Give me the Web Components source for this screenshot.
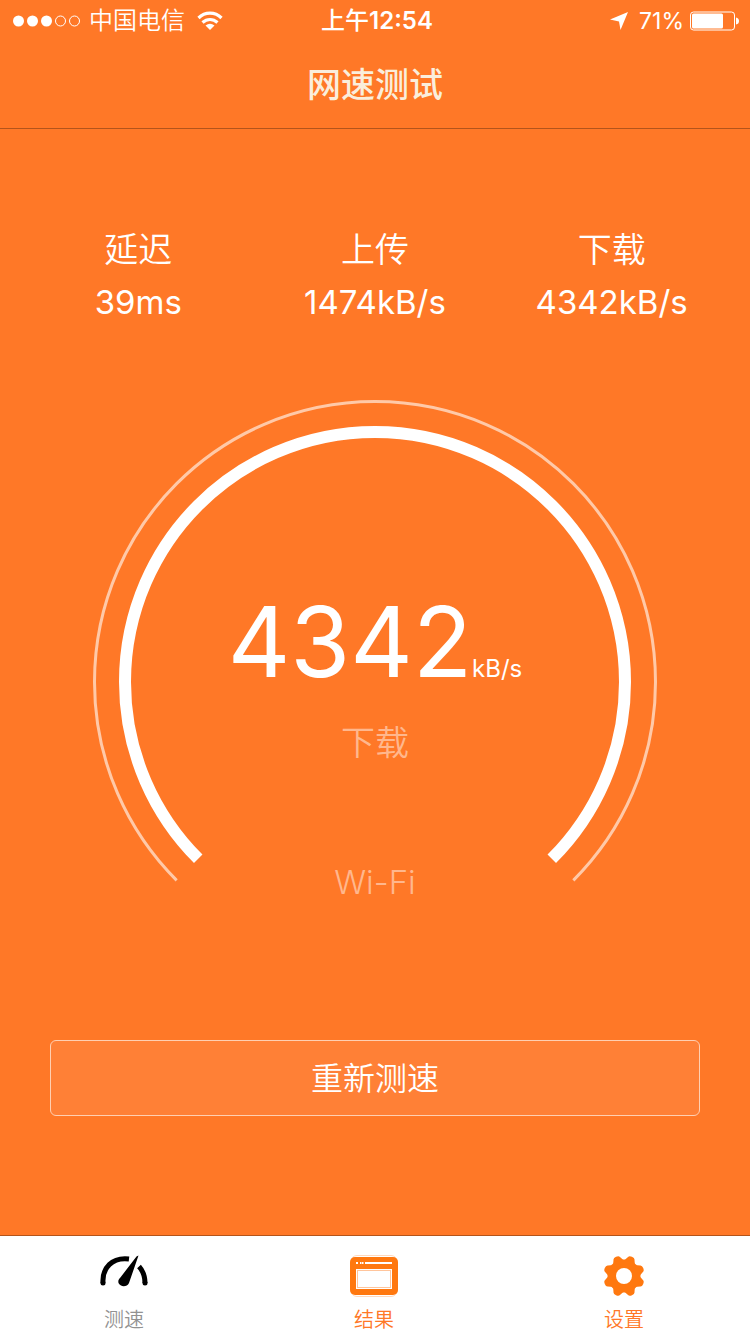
<!DOCTYPE html>
<html lang="zh-CN">
<head>
<meta charset="utf-8">
<meta name="viewport" content="width=device-width, initial-scale=1">
<title>网速测试</title>
<style>
  :root {
    --orange: #ff7827;
    --icon: #ff780f;
    --cream: #faeedc;
  }

  body {
    margin: 0;
    background: var(--orange);
    font-family: Inter, "Noto Sans CJK SC", sans-serif;
    color: #fff;
  }
</style>
</head>
<body>

<speed-app>
  <status-bar slot="top" carrier="中国电信" period="上午" time="12:54" battery="71"></status-bar>
  <nav-header slot="top">网速测试</nav-header>

  <stat-row>
    <stat-item label="延迟">39ms</stat-item>
    <stat-item label="上传">1474kB/s</stat-item>
    <stat-item label="下载">4342kB/s</stat-item>
  </stat-row>
  <speed-gauge value="4342" unit="kB/s" mode="下载" network="Wi-Fi"></speed-gauge>
  <retest-button>重新测速</retest-button>

  <tab-bar slot="bottom">
    <tab-item href="#test" current>
      <svg slot="icon" width="48" height="44" viewBox="0 0 48 44" aria-hidden="true">
        <g fill="none" stroke="#000" stroke-width="5">
          <path d="M3 29 C2 14 12 3 29 5"/>
          <path d="M39 12.500 C43 17 45 23 45 29"/>
        </g>
        <circle cx="3" cy="29" r="2.5"/>
        <circle cx="45" cy="29" r="2.5"/>
        <path d="M38.500 1.500 L29 29 C27 33.500 20 33 18.500 29 C18 27 18.500 25.500 20 24 L36.500 2.500 Z"/>
      </svg>
      测速
    </tab-item>
    <tab-item href="#results">
      <svg slot="icon" width="48" height="44" viewBox="0 0 48 44" aria-hidden="true">
        <rect x="1" y="1.500" width="46" height="41" rx="6" fill="none" stroke="#ffd9bd"/>
        <rect x="0" y="3" width="48" height="38" rx="5" fill="#ff780f"/>
        <path fill="#fff" d="M6 8h2v2H6z M10 8h1.500v2H10z M12 8h1.500v2H12z M15 8h27v2H15z M6 15h36v20H6z"/>
        <rect x="7.500" y="16.500" width="33" height="17" fill="none" stroke="#ffc59c"/>
      </svg>
      结果
    </tab-item>
    <tab-item href="#settings">
      <svg slot="icon" width="48" height="44" viewBox="-24 -22 48 44" aria-hidden="true">
        <g fill="#ff780f">
          <path id="tooth" transform="rotate(22.5)" d="M-6 14 L-3.500 19 Q-3 20.800 0 20.800 T3.500 19 L6 14 V-14 L3.500 -19 Q3 -20.800 0 -20.800 T-3.500 -19 L-6 -14 Z"/>
          <use href="#tooth" transform="rotate(45)"/>
          <use href="#tooth" transform="rotate(90)"/>
          <use href="#tooth" transform="rotate(135)"/>
          <circle r="16.500"/>
        </g>
        <circle r="8" fill="#fff"/>
      </svg>
      设置
    </tab-item>
  </tab-bar>
</speed-app>

<script>
(function () {
  /* =========================
     APP SHELL
  ========================= */
  class SpeedApp extends HTMLElement {
    constructor() {
      super();
      this.attachShadow({ mode: "open" });
      this.shadowRoot.innerHTML = `
      <style>
        :host{
          display:flex;
          flex-direction:column;
          min-height:100vh;
        }

        main{
          flex:1;
          display:flex;
          flex-direction:column;
          padding:95px 0 119px;
        }
      </style>

      <slot name="top"></slot>
      <main><slot></slot></main>
      <slot name="bottom"></slot>
      `;
    }
  }

  /* =========================
     STATUS BAR
  ========================= */
  class StatusBar extends HTMLElement {
    constructor() {
      super();
      this.attachShadow({ mode: "open" });
    }

    connectedCallback() {
      this.render();
    }

    render() {
      const battery = Number(this.getAttribute("battery"));

      this.shadowRoot.innerHTML = `
      <style>
        :host{
          display:grid;
          grid-template-columns:1fr auto 1fr;
          align-items:center;
          height:42px;
          padding:0 10px 0 12px;
          font-size:24px;
          line-height:42px;
        }

        .side{
          display:flex;
          align-items:center;
        }

        .carrier{
          margin:0 12px 0 8px;
          font-weight:350;
        }

        .time{
          padding-left:2px;
          font-weight:600;
        }

        .period{
          font-weight:500;
        }

        .right{
          justify-content:flex-end;
        }

        .battery{
          margin:0 6px 0 10px;
          font-size:23px;
        }

        svg{
          display:block;
        }
      </style>

      <div class="side">
        <svg width="69" height="14" viewBox="0 0 69 14" aria-hidden="true">
          <g fill="#fff">
            <circle cx="6.5" cy="7" r="5.5"/>
            <circle cx="20.5" cy="7" r="5.5"/>
            <circle cx="34.500" cy="7" r="5.5"/>
          </g>
          <g fill="none" stroke="#fff">
            <circle cx="48.500" cy="7" r="5"/>
            <circle cx="62.500" cy="7" r="5"/>
          </g>
        </svg>
        <span class="carrier">${this.getAttribute("carrier")}</span>
        <svg width="26" height="20" viewBox="0 0 26 20" aria-hidden="true">
          <g fill="none" stroke="#fff" stroke-width="3.2">
            <path d="M1.500 7 C8 .5 18 .5 24.500 7"/>
            <path d="M5.500 11.500 C10 7.500 16 7.500 20.500 11.500"/>
          </g>
          <path fill="#fff" d="M8.500 14.500 Q13 11 17.500 14.500 L13 19 Z"/>
        </svg>
      </div>

      <div class="time"><span class="period">${this.getAttribute("period")}</span>${this.getAttribute("time")}</div>

      <div class="side right">
        <svg width="20" height="20" viewBox="0 0 20 20" aria-hidden="true">
          <path fill="#fff" d="M19 1 L11.500 19 L10 10.500 L1 8.500 Z"/>
        </svg>
        <span class="battery">${battery}%</span>
        <svg width="50" height="20" viewBox="0 0 50 20" aria-hidden="true">
          <rect x=".5" y="1" width="44" height="18" rx="3" fill="none" stroke="#fff"/>
          <rect x="2" y="2.500" width="${Math.round(battery * 0.43)}" height="15" rx="1.500" fill="#fff"/>
          <path fill="#fff" d="M46 6.500 Q49 7 49 10 T46 13.500 Z"/>
        </svg>
      </div>
      `;
    }
  }

  /* =========================
     TITLE
  ========================= */
  class NavHeader extends HTMLElement {
    constructor() {
      super();
      this.attachShadow({ mode: "open" });
      this.shadowRoot.innerHTML = `
      <style>
        :host{
          display:block;
          border-bottom:1px solid #b3541b;
        }

        h1{
          margin:0;
          font-size:34px;
          font-weight:500;
          line-height:86px;
          text-align:center;
          color:var(--cream);
        }
      </style>

      <h1><slot></slot></h1>
      `;
    }
  }

  /* =========================
     STATS
  ========================= */
  class StatRow extends HTMLElement {
    constructor() {
      super();
      this.attachShadow({ mode: "open" });
      this.shadowRoot.innerHTML = `
      <style>
        :host{
          display:grid;
          grid-template-columns:repeat(3, 1fr);
          padding:0 20px;
        }
      </style>

      <slot></slot>
      `;
    }
  }

  class StatItem extends HTMLElement {
    constructor() {
      super();
      this.attachShadow({ mode: "open" });
    }

    connectedCallback() {
      this.shadowRoot.innerHTML = `
      <style>
        :host{
          display:block;
          text-align:center;
          line-height:52px;
        }

        .label{
          font-size:34px;
          font-weight:350;
        }

        .value{
          font-size:33px;
        }
      </style>

      <div class="label">${this.getAttribute("label")}</div>
      <div class="value"><slot></slot></div>
      `;
    }
  }

  /* =========================
     GAUGE
  ========================= */
  class SpeedGauge extends HTMLElement {
    constructor() {
      super();
      this.attachShadow({ mode: "open" });
    }

    connectedCallback() {
      this.render();
    }

    /* 270 degree arc, open at the bottom */
    arc(r) {
      const d = r * Math.SQRT1_2;
      return `M${283 - d} ${282 + d} A${r} ${r} 0 1 1 ${283 + d} ${282 + d}`;
    }

    render() {
      this.shadowRoot.innerHTML = `
      <style>
        :host{
          display:grid;
          justify-items:center;
          margin-top:72px;
        }

        svg, .readout{
          grid-area:1 / 1;
        }

        svg{
          display:block;
          width:100%;
          max-width:566px;
        }

        .readout{
          display:flex;
          flex-direction:column;
          align-items:center;
          padding-top:182px;
          line-height:48px;
          font-weight:350;
        }

        .speed{
          display:flex;
          align-items:baseline;
          font-weight:400;
        }

        .number{
          font-size:97px;
          line-height:120px;
        }

        .unit{
          font-size:24px;
        }

        .mode, .network{
          color:#ffb78d;
        }

        .mode{
          margin-top:17px;
          font-size:34px;
        }

        .network{
          margin-top:91px;
          font-size:33px;
        }
      </style>

      <svg viewBox="0 0 566 490" fill="none" aria-hidden="true">
        <path d="${this.arc(280.5)}" stroke="#ffc9a8" stroke-width="3"/>
        <path d="${this.arc(250)}" stroke="#fff" stroke-width="12"/>
      </svg>

      <div class="readout">
        <div class="speed">
          <span class="number">${this.getAttribute("value")}</span>
          <span class="unit">${this.getAttribute("unit")}</span>
        </div>
        <div class="mode">${this.getAttribute("mode")}</div>
        <div class="network">${this.getAttribute("network")}</div>
      </div>
      `;
    }
  }

  /* =========================
     BUTTON
  ========================= */
  class RetestButton extends HTMLElement {
    constructor() {
      super();
      this.attachShadow({ mode: "open" });
      this.shadowRoot.innerHTML = `
      <style>
        :host{
          display:block;
          margin-top:auto;
          padding:0 50px;
        }

        button{
          display:block;
          width:100%;
          height:76px;
          padding:0 0 4px;
          border:1px solid #ffcfb2;
          border-radius:6px;
          background:#ff8036;
          color:#fff;
          font:inherit;
          font-size:32px;
          font-weight:350;
          cursor:pointer;
        }
      </style>

      <button type="button"><slot></slot></button>
      `;

      this.shadowRoot.querySelector("button").addEventListener("click", () => {
        this.dispatchEvent(new CustomEvent("retest", { bubbles: true }));
      });
    }
  }

  /* =========================
     TABS
  ========================= */
  class TabBar extends HTMLElement {
    constructor() {
      super();
      this.attachShadow({ mode: "open" });
      this.shadowRoot.innerHTML = `
      <style>
        :host{
          display:block;
          background:#fff;
          border-top:1px solid #b3541b;
        }

        nav{
          display:grid;
          grid-template-columns:repeat(3, 1fr);
        }
      </style>

      <nav><slot></slot></nav>
      `;
    }
  }

  class TabItem extends HTMLElement {
    constructor() {
      super();
      this.attachShadow({ mode: "open" });
    }

    connectedCallback() {
      this.shadowRoot.innerHTML = `
      <style>
        :host{
          display:block;
          color:var(--orange);
        }

        :host([current]){
          color:#929292;
        }

        a{
          display:flex;
          flex-direction:column;
          align-items:center;
          gap:8px;
          padding:18px 2px 0 0;
          font-size:20px;
          line-height:28px;
          font-weight:350;
          color:inherit;
          text-decoration:none;
        }

        ::slotted(svg){
          display:block;
        }
      </style>

      <a href="${this.getAttribute("href")}">
        <slot name="icon"></slot>
        <span><slot></slot></span>
      </a>
      `;
    }
  }

  customElements.define("speed-app", SpeedApp);
  customElements.define("status-bar", StatusBar);
  customElements.define("nav-header", NavHeader);
  customElements.define("stat-row", StatRow);
  customElements.define("stat-item", StatItem);
  customElements.define("speed-gauge", SpeedGauge);
  customElements.define("retest-button", RetestButton);
  customElements.define("tab-bar", TabBar);
  customElements.define("tab-item", TabItem);
})();
</script>
</body>
</html>
